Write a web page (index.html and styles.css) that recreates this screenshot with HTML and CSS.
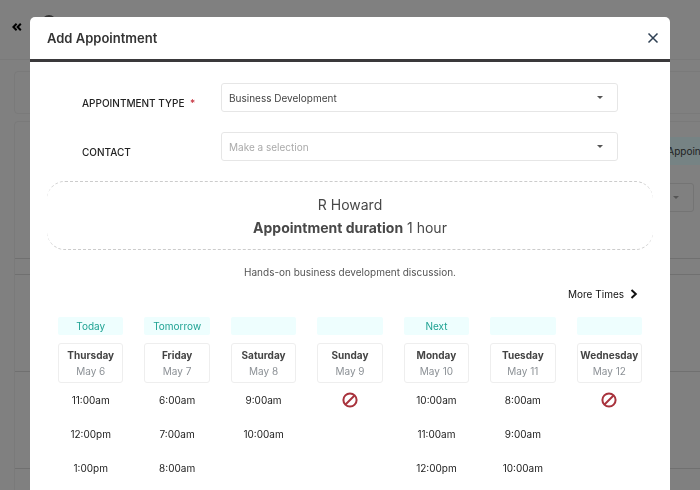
FILE: index.html
```html
<!DOCTYPE html>
<html lang="en">
<head>
  <meta charset="UTF-8" />
  <meta name="viewport" content="width=device-width, initial-scale=1" />
  <title>Add Appointment</title>
  <link rel="stylesheet" href="styles.css">
</head>
<body>

  <div class="page" inert>
    <div class="topbar">
      <button class="collapse" aria-label="Collapse menu">
        <svg viewBox="0 0 10 8" width="10" height="8"><path d="M4.6 0.7 1.4 4l3.2 3.3M8.8 0.7 5.6 4l3.2 3.3" /></svg>
      </button>
      <span class="avatar"></span>
    </div>
    <div class="panel filter"></div>
    <div class="panel calendar">
      <div class="toolbar"><button class="tab">Appointments</button></div>
      <div class="toolbar">
        <div class="select-wrap view"><select class="select" aria-label="View"><option></option></select></div>
      </div>
      <div class="row head"></div>
      <div class="row strip"></div>
      <div class="row tall"></div>
      <div class="row tall"></div>
    </div>
  </div>

  <div class="overlay">
    <div class="modal" role="dialog" aria-labelledby="title">
      <div class="modal-header">
        <h1 id="title">Add Appointment</h1>
        <button class="close" aria-label="Close">
          <svg viewBox="0 0 12 12" width="12" height="12"><path d="M1.5 1.5l9 9M10.5 1.5l-9 9" /></svg>
        </button>
      </div>

      <div class="modal-body">
        <div class="field">
          <label for="type">APPOINTMENT TYPE <span class="required">*</span></label>
          <div class="select-wrap">
            <select class="select" id="type">
              <option>Business Development</option>
            </select>
          </div>
        </div>
        <div class="field">
          <label for="contact">CONTACT</label>
          <div class="select-wrap">
            <select class="select placeholder" id="contact">
              <option>Make a selection</option>
            </select>
          </div>
        </div>

        <div class="summary">
          <div>R Howard</div>
          <div><strong>Appointment duration</strong> 1 hour</div>
        </div>

        <p class="description">Hands-on business development discussion.</p>

        <button class="more">More Times
          <svg viewBox="0 0 8 10" width="8" height="10"><path d="M1.5 1l4.3 4-4.3 4" /></svg>
        </button>

        <div class="days">
          <div class="day">
            <div class="tag">Today</div>
            <div class="date"><strong>Thursday</strong><span>May 6</span></div>
            <button class="slot">11:00am</button>
            <button class="slot">12:00pm</button>
            <button class="slot">1:00pm</button>
          </div>
          <div class="day">
            <div class="tag">Tomorrow</div>
            <div class="date"><strong>Friday</strong><span>May 7</span></div>
            <button class="slot">6:00am</button>
            <button class="slot">7:00am</button>
            <button class="slot">8:00am</button>
          </div>
          <div class="day">
            <div class="tag"></div>
            <div class="date"><strong>Saturday</strong><span>May 8</span></div>
            <button class="slot">9:00am</button>
            <button class="slot">10:00am</button>
          </div>
          <div class="day">
            <div class="tag"></div>
            <div class="date"><strong>Sunday</strong><span>May 9</span></div>
            <div class="closed">
              <svg viewBox="0 0 16 16" width="16" height="16"><circle cx="8" cy="8" r="6.6" /><path d="M3.5 12.5l9-9" /></svg>
            </div>
          </div>
          <div class="day">
            <div class="tag">Next</div>
            <div class="date"><strong>Monday</strong><span>May 10</span></div>
            <button class="slot">10:00am</button>
            <button class="slot">11:00am</button>
            <button class="slot">12:00pm</button>
          </div>
          <div class="day">
            <div class="tag"></div>
            <div class="date"><strong>Tuesday</strong><span>May 11</span></div>
            <button class="slot">8:00am</button>
            <button class="slot">9:00am</button>
            <button class="slot">10:00am</button>
          </div>
          <div class="day">
            <div class="tag"></div>
            <div class="date"><strong>Wednesday</strong><span>May 12</span></div>
            <div class="closed">
              <svg viewBox="0 0 16 16" width="16" height="16"><circle cx="8" cy="8" r="6.6" /><path d="M3.5 12.5l9-9" /></svg>
            </div>
          </div>
        </div>
      </div>
    </div>
  </div>

</body>
</html>
```
FILE: styles.css
```css
* {
  box-sizing: border-box;
}
body {
  margin: 0;
  height: 100vh;
  overflow: hidden;
  font-family: Inter, "Liberation Sans", sans-serif;
  font-size: 10px;
  line-height: 16px;
  color: #222;
}
button {
  padding: 0;
  border: 0;
  background: none;
  font: inherit;
  color: inherit;
  cursor: pointer;
}
svg {
  display: block;
  fill: none;
  stroke: currentColor;
}

/* page behind the dialog */
.page {
  height: 100vh;
  overflow: hidden;
  background: #808080;
}
.topbar {
  display: flex;
  align-items: flex-start;
  gap: 20px;
  height: 60px;
  padding: 15px 12px;
  border-bottom: 1px solid #7a7a7a;
}
.collapse {
  padding-top: 8px;
  color: #000;
}
.collapse svg {
  stroke-width: 2;
}
.avatar {
  width: 14px;
  height: 14px;
  border-radius: 50%;
  background: #333;
}
.panel {
  margin: 11px -60px 0 14px;
  border: 1px solid #7a7a7a;
  border-radius: 4px;
}
.filter {
  height: 43px;
}
.calendar {
  height: 100vh;
  margin-top: 7px;
  padding-top: 15px;
}
.toolbar {
  display: flex;
  justify-content: flex-end;
  margin-bottom: 18px;
}
.tab {
  height: 28px;
  margin-right: 13px;
  padding: 0 13px;
  background: #768384;
  color: #222;
}
.view {
  width: 120px;
  margin-right: 65px;
}
.page .select {
  background: none;
  border-color: #747474;
}
.row {
  border-bottom: 1px solid #707070;
}
.head {
  height: 29px;
}
.strip {
  height: 16px;
}
.tall {
  height: 97px;
}

/* dialog */
.overlay {
  position: fixed;
  inset: 0;
  padding: 17px 30px 0;
}
.modal {
  height: 100%;
  overflow: hidden;
  background: #fff;
  border-radius: 5px 5px 0 0;
}
.modal-header {
  display: flex;
  justify-content: space-between;
  align-items: center;
  height: 45px;
  padding: 0 11px 0 17px;
  border-bottom: 3px solid #3a393b;
}
.modal-header h1 {
  margin: 0;
  font-size: 13px;
  font-weight: 600;
  color: #333;
}
.close {
  color: #2f4054;
}
.close svg {
  stroke-width: 1.5;
}
.modal-body {
  padding: 21px 17px 0;
}
.field {
  display: grid;
  grid-template-columns: 139px 1fr;
  align-items: center;
  height: 29px;
  margin: 0 35px 20px;
}
.field label {
  padding-top: 10px;
  font-weight: 500;
}
.required {
  margin-left: 3px;
  color: #c5303c;
}
.select-wrap {
  position: relative;
}
.select-wrap::after {
  content: "";
  position: absolute;
  top: 13px;
  right: 15px;
  border: 3px solid transparent;
  border-top-color: #555;
  border-bottom: 0;
  pointer-events: none;
}
.select {
  display: block;
  appearance: none;
  width: 100%;
  height: 29px;
  padding: 0 7px;
  border: 1px solid #e6e6e6;
  border-radius: 3px;
  background: #fff;
  font: inherit;
  color: #444;
}
.placeholder {
  color: #aaa;
}
.summary {
  height: 69px;
  padding-top: 11px;
  border-top: 1px dashed #ccc;
  border-bottom: 1px dashed #ccc;
  border-radius: 18px;
  font-size: 14px;
  line-height: 23px;
  text-align: center;
  color: #484848;
}
.summary strong {
  font-weight: 700;
}
.description {
  margin: 14px 0 6px;
  text-align: center;
  color: #555;
}
.more {
  display: flex;
  align-items: center;
  gap: 6px;
  margin: 0 15px 0 auto;
  color: #111;
}
.more svg {
  stroke-width: 2;
}
.days {
  display: grid;
  grid-template-columns: repeat(7, minmax(0, 1fr));
  gap: 21px;
  padding: 15px 11px 0;
}
.day {
  display: flex;
  flex-direction: column;
  align-items: center;
}
.tag {
  width: 100%;
  height: 18px;
  margin-bottom: 8px;
  border-radius: 2px;
  background: #eefefe;
  line-height: 18px;
  text-align: center;
  color: #1fa293;
}
.date {
  display: flex;
  flex-direction: column;
  align-items: center;
  width: 100%;
  height: 40px;
  padding-top: 3px;
  border: 1px solid #eee;
  border-radius: 3px;
  color: #8c9196;
}
.date strong {
  font-weight: 700;
  color: #444;
}
.slot,
.closed {
  display: flex;
  align-items: center;
  height: 34px;
}
.closed {
  color: #a8323c;
}
.closed svg {
  stroke-width: 2;
}
```
